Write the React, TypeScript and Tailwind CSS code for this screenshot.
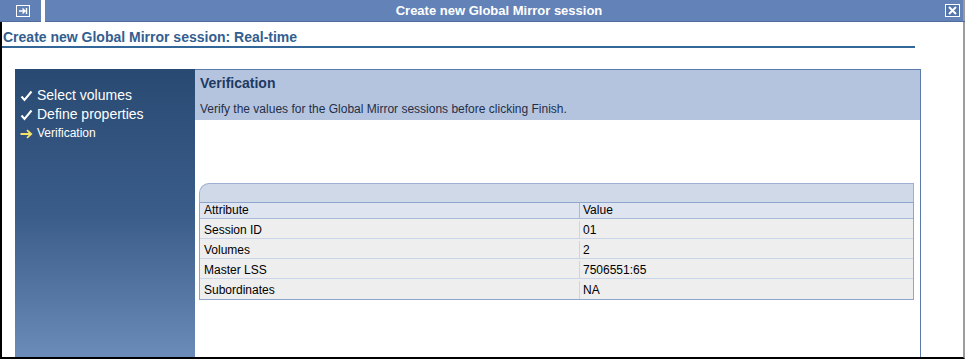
import React from 'react';

const rows = [
  { attr: 'Session ID', value: '01' },
  { attr: 'Volumes', value: '2' },
  { attr: 'Master LSS', value: '7506551:65' },
  { attr: 'Subordinates', value: 'NA' },
];

const Check = () => (
  <svg width="13" height="12" viewBox="0 0 13 12" className="shrink-0">
    <path d="M1.5 6.5 L4.5 10 L11.5 1.5" fill="none" stroke="white" strokeWidth="2" />
  </svg>
);

const Arrow = () => (
  <svg width="13" height="10" viewBox="0 0 13 10" className="shrink-0">
    <path d="M0.5 5 H11 M7 1.2 L11.2 5 L7 8.8" fill="none" stroke="#f5e26a" strokeWidth="1.8" />
  </svg>
);

export default function App() {
  return (
    <div
      className="w-[965px] h-[359px] flex flex-col bg-white overflow-hidden"
      style={{ fontFamily: '"Liberation Sans", Arial, sans-serif' }}
    >
      {/* title bar */}
      <div className="flex h-[22px] shrink-0">
        <div className="w-[41px] bg-[#6080b6] border-b border-[#4f6c9c] flex items-center justify-center pl-[4px]">
          <svg width="14" height="12" viewBox="0 0 14 12">
            <rect x="0.5" y="0.5" width="13" height="11" fill="none" stroke="white" />
            <path d="M3 6 H9 M6.5 3.5 L9 6 L6.5 8.5 M10.5 3 V9" fill="none" stroke="white" strokeWidth="1.4" />
          </svg>
        </div>
        <div className="w-[4px] bg-white" />
        <div className="flex-1 bg-[#6383b8] border-b border-[#4f6c9c] flex items-center">
          <span className="flex-1 text-center text-white text-[13px] font-bold leading-none pl-[8px]">
            Create new Global Mirror session
          </span>
          <div className="w-[15px] h-[13px] border border-white bg-[#5475ac] flex items-center justify-center mr-[3px]">
            <svg width="9" height="9" viewBox="0 0 9 9">
              <path d="M1 1 L8 8 M8 1 L1 8" stroke="white" strokeWidth="2" />
            </svg>
          </div>
          <div className="w-[2px] self-stretch bg-[#9a9a9a]" />
        </div>
      </div>

      {/* body */}
      <div className="flex-1 flex flex-col border-l-2 border-l-black border-r-2 border-r-[#9c9c9c] border-b-2 border-b-black min-h-0">
        <div className="pl-[1px] pt-[8px] text-[14px] font-bold text-[#335e90] leading-[15px]">
          Create new Global Mirror session: Real-time
        </div>
        <div className="mt-[1px] h-[2px] w-[913px] bg-[#336699]" />

        <div className="flex-1 flex mt-[21px] ml-[13px] min-h-0">
          {/* sidebar */}
          <div className="w-[180px] bg-gradient-to-b from-[#284a72] via-[#3a5c89] to-[#6b8bb8] pt-[17px] pl-[5px] flex flex-col">
            <div className="flex items-center gap-[4px] text-white text-[14px] leading-[19px]">
              <Check />
              <span>Select volumes</span>
            </div>
            <div className="flex items-center gap-[4px] text-white text-[14px] leading-[19px]">
              <Check />
              <span>Define properties</span>
            </div>
            <div className="flex items-center gap-[4px] text-white text-[12px] leading-[19px]">
              <Arrow />
              <span>Verification</span>
            </div>
          </div>

          {/* content */}
          <div className="w-[726px] border-t border-r border-[#5b7bab] flex flex-col">
            <div className="h-[50px] bg-[#b5c4de] pl-[5px] pt-[4px]">
              <div className="text-[14px] font-bold text-[#1e3a63] leading-[18px]">Verification</div>
              <div className="text-[12px] text-[#1e2f4a] mt-[10px] leading-[14px]">
                Verify the values for the Global Mirror sessions before clicking Finish.
              </div>
            </div>

            <div className="ml-[4px] mt-[63px] w-[715px]">
              <div className="h-[19px] bg-[#d0d9e8] border-t border-l border-r border-[#9db0d2] rounded-tl-[10px]" />
              <div className="border border-[#8ea5cc] text-[12px] text-black">
                <div className="flex h-[16px] bg-[#dfe5f0] border-b border-[#a9bad8] leading-[15px]">
                  <div className="w-[380px] pl-[4px] border-r border-[#a9bad8]">Attribute</div>
                  <div className="flex-1 pl-[3px]">Value</div>
                </div>
                {rows.map((r, i) => (
                  <div
                    key={r.attr}
                    className={
                      i < rows.length - 1
                        ? 'flex h-[20px] bg-[#eeeeee] border-b border-[#cad5e8] items-center pt-[2px]'
                        : 'flex h-[20px] bg-[#eeeeee] items-center pt-[2px]'
                    }
                  >
                    <div className="w-[380px] pl-[4px] h-full flex items-center border-r border-[#cad5e8]">{r.attr}</div>
                    <div className="flex-1 pl-[3px]">{r.value}</div>
                  </div>
                ))}
              </div>
            </div>
          </div>
        </div>
      </div>
    </div>
  );
}
